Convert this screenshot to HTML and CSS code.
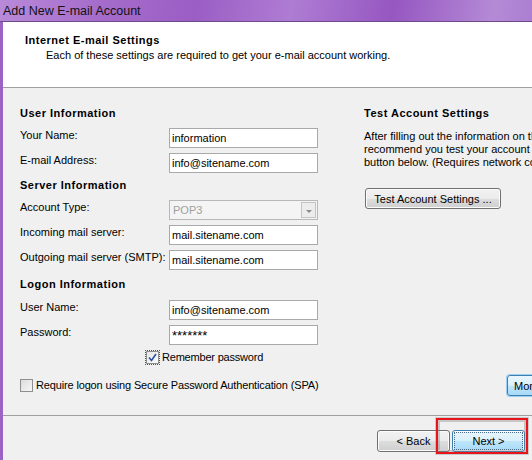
FILE: index.html
```html
<!DOCTYPE html>
<html lang="en">
<head>
  <meta charset="UTF-8" />
  <title>Add New E-mail Account</title>
  <link rel="stylesheet" href="styles.css">
</head>
<body>

  <div class="window">
    <!-- Title bar -->
    <div class="titlebar">Add New E-mail Account</div>

    <!-- White header -->
    <div class="header">
      <h2 class="header-title">Internet E-mail Settings</h2>
      <p class="header-sub">Each of these settings are required to get your e-mail account working.</p>
    </div>

    <div class="content">
      <!-- Left column: the form -->
      <div class="form-col">
        <h3 class="section">User Information</h3>
        <div class="field">
          <label>Your Name:</label>
          <input type="text" value="information">
        </div>
        <div class="field">
          <label>E-mail Address:</label>
          <input type="text" value="info@sitename.com">
        </div>

        <h3 class="section">Server Information</h3>
        <div class="field">
          <label>Account Type:</label>
          <div class="select disabled">
            <span>POP3</span>
            <span class="select-btn"><span class="arrow"></span></span>
          </div>
        </div>
        <div class="field">
          <label>Incoming mail server:</label>
          <input type="text" value="mail.sitename.com">
        </div>
        <div class="field">
          <label>Outgoing mail server (SMTP):</label>
          <input type="text" value="mail.sitename.com">
        </div>

        <h3 class="section logon">Logon Information</h3>
        <div class="field">
          <label>User Name:</label>
          <input type="text" value="info@sitename.com">
        </div>
        <div class="field">
          <label>Password:</label>
          <input type="text" class="pass" value="*******">
        </div>

        <div class="check remember">
          <span class="box checked">
            <svg width="9" height="9" viewBox="0 0 9 9"><path d="M1 4.5 L3.5 7.5 L8 1" fill="none" stroke="#2a4fa8" stroke-width="1.6"/></svg>
          </span>
          <span>Remember password</span>
        </div>
        <div class="check spa">
          <span class="box"></span>
          <span>Require logon using Secure Password Authentication (SPA)</span>
        </div>
      </div>

      <!-- Right column: test settings -->
      <div class="test-col">
        <h3 class="section">Test Account Settings</h3>
        <p class="test-text">After filling out the information on this screen, we<br>recommend you test your account by clicking the<br>button below. (Requires network connection)</p>
        <button class="btn test-btn">Test Account Settings ...</button>
        <div class="spacer"></div>
        <button class="btn more-btn">More Settings ...</button>
      </div>
    </div>

    <!-- Footer buttons -->
    <div class="footer">
      <button class="btn back-btn">&lt; Back</button>
      <button class="btn next-btn">Next &gt;</button>
      <span class="highlight"></span>
    </div>
  </div>

</body>
</html>
```

FILE: styles.css
```css
body {
  margin: 0;
  width: 532px;
  height: 460px;
  overflow: hidden;
  font-family: "Liberation Sans", Arial, sans-serif;
  font-size: 11px;
  color: #000;
}

.window {
  width: 560px;
  height: 460px;
  display: flex;
  flex-direction: column;
  background: #f0f0f0;
  border-left: 3px solid #9c63c4;
  box-sizing: border-box;
}

.titlebar {
  height: 22px;
  margin-left: -3px;
  padding-left: 3px;
  line-height: 23px;
  font-size: 12.5px;
  color: #111;
  background: linear-gradient(100deg, #b98ad9 0%, #a56ccb 18%, #9b5ec4 35%, #ae7cd3 52%, #9657c1 70%, #b48ad6 88%, #a676cf 100%);
  border-bottom: 1px solid #6e4a8a;
  box-sizing: border-box;
}

.header {
  height: 66px;
  background: #fff;
  border-bottom: 1px solid #a0a0a0;
  box-sizing: border-box;
  padding: 12px 0 0 22px;
}

.header-title {
  margin: 0;
  font-size: 11px;
  font-weight: bold;
  letter-spacing: 0.5px;
  line-height: 13px;
}

.header-sub {
  margin: 2px 0 0 21px;
  line-height: 13px;
}

.content {
  display: flex;
  height: 328px;
  border-bottom: 1px solid #a0a0a0;
  box-sizing: border-box;
}

.form-col {
  width: 340px;
  flex-shrink: 0;
  padding: 18px 0 0 17px;
  box-sizing: border-box;
}

.section {
  margin: 0;
  padding-top: 1px;
  height: 14px;
  padding-bottom: 7px;
  font-size: 11px;
  font-weight: bold;
  letter-spacing: 0.5px;
  line-height: 13px;
}

.section.logon {
  padding-top: 3px;
  padding-bottom: 8px;
}

.field {
  display: flex;
  height: 20px;
  margin-bottom: 5px;
}

.field label {
  width: 149px;
  padding-top: 1px;
  line-height: 13px;
}

.field input,
.select {
  width: 149px;
  height: 20px;
  box-sizing: border-box;
  border: 1px solid #a9a9a9;
  background: #fff;
  padding: 0 2px;
  font-family: "Liberation Sans", Arial, sans-serif;
  font-size: 11px;
  color: #000;
  outline: none;
}

.field input.pass {
  font-size: 13px;
  letter-spacing: 0;
  padding-top: 1px;
}

.select {
  display: flex;
  align-items: center;
  justify-content: space-between;
  padding: 0 1px 0 3px;
}

.select.disabled {
  background: #f4f4f4;
  border-color: #b8b8b8;
  color: #a0a0a0;
}

.select-btn {
  width: 15px;
  height: 16px;
  border: 1px solid #c4c4c4;
  background: #ececec;
  box-sizing: border-box;
  display: flex;
  align-items: center;
  justify-content: center;
}

.arrow {
  width: 0;
  height: 0;
  border-left: 3px solid transparent;
  border-right: 3px solid transparent;
  border-top: 3px solid #8a8a8a;
  margin-top: 2px;
}

.check {
  display: flex;
  align-items: center;
  height: 14px;
  line-height: 13px;
  white-space: nowrap;
}

.check .box {
  width: 13px;
  height: 13px;
  box-sizing: border-box;
  border: 1px solid #8e8f8f;
  background: linear-gradient(135deg, #dcdcdc, #f6f6f6);
  margin-right: 3px;
  display: flex;
  align-items: center;
  justify-content: center;
}

.check .box.checked {
  background: linear-gradient(135deg, #e6e6e6, #fbfbfb);
  outline: 1px dotted #555;
  outline-offset: 0;
}

.remember {
  margin: 4px 0 0 126px;
  letter-spacing: -0.2px;
}

.spa {
  margin-top: 14px;
  letter-spacing: -0.15px;
}

.test-col {
  flex: 1;
  min-width: 0;
  padding: 18px 0 19px 21px;
  display: flex;
  flex-direction: column;
  align-items: flex-start;
}

.test-text {
  margin: 2px 0 0;
  line-height: 13px;
  white-space: nowrap;
}

.btn {
  font-family: "Liberation Sans", Arial, sans-serif;
  font-size: 11px;
  color: #000;
  height: 21px;
  border: 1px solid #707070;
  border-radius: 3px;
  background: linear-gradient(#f2f2f2 0%, #ebebeb 50%, #dddddd 51%, #cfcfcf 100%);
  box-shadow: inset 0 0 0 1px #fcfcfc;
  padding: 0 6px;
}

.test-btn {
  margin: 19px 0 0 1px;
  width: 136px;
}

.spacer {
  flex: 1;
}

.more-btn {
  margin-left: 143px;
  width: 120px;
  height: 21px;
  text-align: left;
  border-color: #3c7fb1;
  background: linear-gradient(#eaf6fd 0%, #d9f0fc 50%, #bee6fd 51%, #a7d9f5 100%);
  box-shadow: 0 0 0 1px #9fcdef;
}

.footer {
  flex: 1;
  position: relative;
  display: flex;
  align-items: flex-start;
  padding: 14px 0 0 374px;
  gap: 2px;
}

.back-btn,
.next-btn {
  width: 73px;
  height: 22px;
}

.next-btn {
  border-color: #3c7fb1;
  background: linear-gradient(#eaf6fd 0%, #d9f0fc 50%, #bee6fd 51%, #a7d9f5 100%);
  box-shadow: inset 0 0 0 1px #fff;
  outline: 1px dotted #4a6a8a;
  outline-offset: -3px;
}

/* red annotation box over the Next button */
.highlight {
  position: absolute;
  left: 433px;
  top: 2px;
  width: 88px;
  height: 32px;
  border: 2px solid #e8141b;
  box-shadow: inset 0 0 0 2px rgba(120, 120, 120, 0.35), 0 0 0 1px rgba(120, 120, 120, 0.3);
}
```
